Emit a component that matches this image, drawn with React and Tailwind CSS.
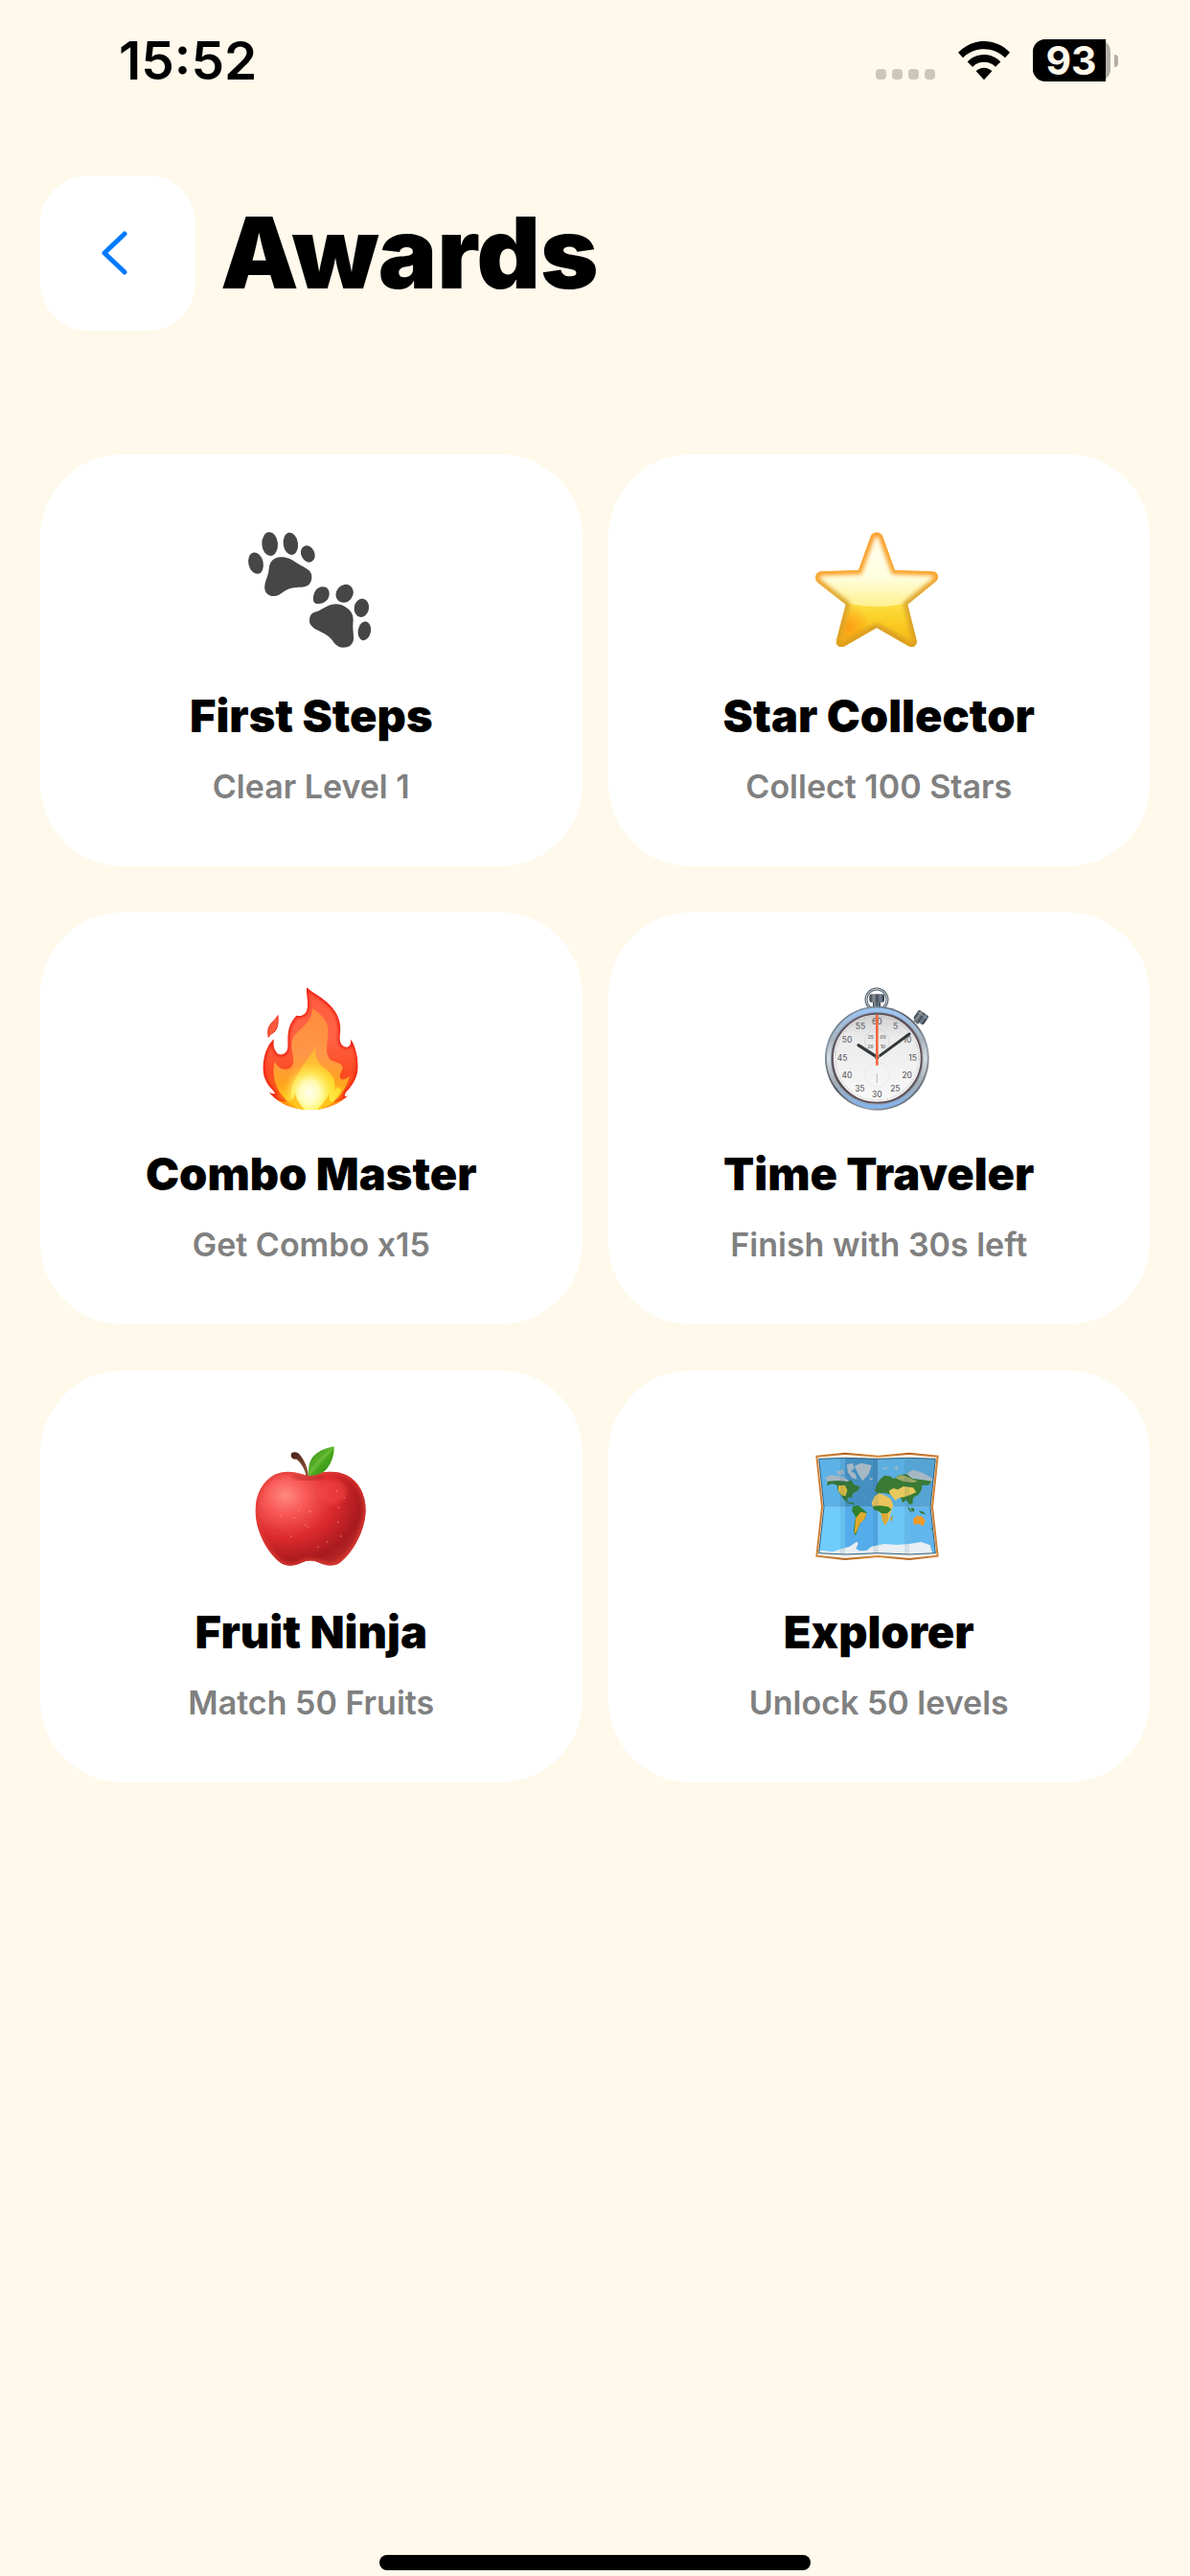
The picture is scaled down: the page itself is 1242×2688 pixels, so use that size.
import { useState } from "react";

function PawsIcon(props) {
  return (
    <svg viewBox="30 -7 450 465" fill="#464646" {...props}>
      <path d="M122 160C124 136 138 124 158 123C186 121 202 138 222 149C244 160 257 168 256 187C255 206 243 217 222 217C202 218 188 218 170 230C158 239 149 245 137 245C118 245 106 232 109 211C112 192 120 182 122 160Z" />
      <ellipse cx="81" cy="142" rx="23" ry="34" transform="rotate(-14 81 142)" />
      <ellipse cx="125" cy="82" rx="25" ry="37" transform="rotate(-4 125 82)" />
      <ellipse cx="190" cy="81" rx="23" ry="35" transform="rotate(-8 190 81)" />
      <ellipse cx="244" cy="113" rx="21" ry="27" transform="rotate(-26 244 113)" />
      <path d="M264 296C282 291 290 284 302 278C322 268 342 267 360 278C378 289 386 300 386 322C383 345 388 360 387 379C386 396 373 406 354 406C336 406 328 394 318 381C306 366 290 360 272 351C256 342 248 332 249 320C249 308 254 299 264 296Z" />
      <path d="M289 216C304 215 312 226 311 239C310 256 297 269 277 269C264 270 259 261 261 247C264 229 274 217 289 216Z" />
      <ellipse cx="359" cy="237" rx="26" ry="30" transform="rotate(40 359 237)" />
      <ellipse cx="412" cy="282" rx="23" ry="29" transform="rotate(10 412 282)" />
      <ellipse cx="421" cy="354" rx="20" ry="30" transform="rotate(10 421 354)" />
    </svg>
  );
}

const STAR =
  "M219 59C225 41 250 41 257 59L295 164L412 168C431 169 436 189 422 200L335 271L363 383C366 401 350 409 337 401L238 344L139 401C126 409 109 402 112 384L141 271L54 203C40 191 47 169 65 168L181 164Z";

function StarIcon(props) {
  return (
    <svg viewBox="19 -7 450 465" {...props}>
      <defs>
        <linearGradient id="star-edge" x1="0" y1="0" x2="0" y2="1">
          <stop offset="0" stopColor="#fb9a26" />
          <stop offset=".38" stopColor="#f9a42c" />
          <stop offset=".58" stopColor="#d9a832" />
          <stop offset="1" stopColor="#dfa01c" />
        </linearGradient>
        <linearGradient id="star-low" x1="0" y1="0" x2="0" y2="1">
          <stop offset=".55" stopColor="#ffe64e" />
          <stop offset=".8" stopColor="#fbcb22" />
          <stop offset="1" stopColor="#f2b41c" />
        </linearGradient>
        <linearGradient id="star-high" x1="0" y1="0" x2="0" y2="1">
          <stop offset="0" stopColor="#fffef0" />
          <stop offset=".6" stopColor="#ffffe2" />
          <stop offset="1" stopColor="#fff08e" />
        </linearGradient>
        <radialGradient id="star-warm">
          <stop offset="0" stopColor="#ff9410" stopOpacity=".8" />
          <stop offset="1" stopColor="#ff9410" stopOpacity="0" />
        </radialGradient>
        <filter id="star-soft" x="-10%" y="-10%" width="120%" height="120%">
          <feGaussianBlur stdDeviation="7" />
        </filter>
        <clipPath id="star-clip">
          <path d={STAR} />
        </clipPath>
      </defs>
      <g clipPath="url(#star-clip)">
        <path d={STAR} fill="url(#star-low)" />
        <path d="M40 40H440V225Q340 278 238 278Q136 278 40 225Z" fill="url(#star-high)" />
        <circle cx="150" cy="340" r="70" fill="url(#star-warm)" />
        <path d="M238 344L337 401M238 344L139 401" stroke="#c98d12" strokeWidth="16" opacity=".7" filter="url(#star-soft)" />
        <path d={STAR} fill="none" stroke="url(#star-edge)" strokeWidth="26" filter="url(#star-soft)" />
        <path d={STAR} fill="none" stroke="url(#star-edge)" strokeWidth="6" opacity=".4" />
      </g>
    </svg>
  );
}

const FLAME =
  "M210 46C235 68 270 82 294 114C316 143 318 170 314 198C312 220 322 234 337 233C348 230 350 220 348 208C362 228 371 262 371 295C370 325 356 350 338 369C331 376 327 384 330 387C334 387 338 385 340 383C325 401 290 421 245 428C225 431 205 430 190 427C150 420 118 405 90 372C97 377 106 381 112 378C108 370 96 362 86 345C74 324 70 300 76 272C81 245 92 221 108 208C104 224 107 243 120 254C133 261 149 252 151 235C153 215 148 198 156 172C161 154 170 144 178 134C192 138 206 132 211 117C217 96 209 72 210 46Z";

function FireIcon(props) {
  return (
    <svg viewBox="0 3 450 465" {...props}>
      <defs>
        <linearGradient id="fire-red" x1="0" y1="0" x2="0" y2="1">
          <stop offset="0" stopColor="#ff5a3c" />
          <stop offset=".4" stopColor="#ff6446" />
          <stop offset=".7" stopColor="#fb4a22" />
          <stop offset="1" stopColor="#ff7a10" />
        </linearGradient>
        <linearGradient id="fire-orange" x1="0" y1="0" x2="0" y2="1">
          <stop offset="0" stopColor="#ff8c3c" />
          <stop offset=".45" stopColor="#ff9648" />
          <stop offset=".75" stopColor="#ffa51e" />
          <stop offset="1" stopColor="#ffe21e" />
        </linearGradient>
        <linearGradient id="fire-yellow" x1="0" y1="0" x2="0" y2="1">
          <stop offset="0" stopColor="#ffae3c" />
          <stop offset=".5" stopColor="#ffd32c" />
          <stop offset="1" stopColor="#fff23c" />
        </linearGradient>
        <radialGradient id="fire-glow">
          <stop offset="0" stopColor="#fffff0" />
          <stop offset=".4" stopColor="#ffffc4" stopOpacity=".9" />
          <stop offset="1" stopColor="#fff23c" stopOpacity="0" />
        </radialGradient>
        <filter id="fire-soft">
          <feGaussianBlur stdDeviation="5" />
        </filter>
        <clipPath id="fire-clip">
          <path d={FLAME} />
        </clipPath>
      </defs>
      <path d="M120 134C122 158 119 178 107 187C99 192 94 195 91 202C87 184 89 172 99 159C108 149 115 143 120 134Z" fill="#fb5a3c" stroke="#ee3424" strokeWidth="3" />
      <g clipPath="url(#fire-clip)">
        <path d={FLAME} fill="url(#fire-red)" />
        <path d={FLAME} fill="none" stroke="#ee2412" strokeWidth="12" filter="url(#fire-soft)" />
        <path d="M228 112C256 130 277 150 277 180C278 210 268 240 277 262C285 283 310 276 320 290C329 303 309 315 315 329C321 340 334 333 345 323C330 375 300 412 245 430H190C145 405 112 370 107 320C106 304 106 288 112 278C119 300 144 310 161 296C180 278 158 242 164 215C172 180 232 160 228 112Z" fill="url(#fire-orange)" />
        <path d="M238 232C236 270 246 284 270 302C298 322 300 344 299 372C300 360 308 352 318 366C306 398 280 420 245 430H190C160 412 154 366 172 336C186 310 214 270 238 232Z" fill="url(#fire-yellow)" />
        <ellipse cx="219" cy="376" rx="82" ry="92" fill="url(#fire-glow)" />
        <path d="M172 371C176 396 190 412 204 430H160C130 420 110 404 100 388C140 412 176 410 172 371ZM282 378C268 402 254 416 243 430H280L335 390C310 404 274 420 282 378Z" fill="#ffb60a" opacity=".75" />
      </g>
    </svg>
  );
}

const DIAL = [
  { n: "60", x: 224, y: 153 },
  { n: "5", x: 282, y: 169 },
  { n: "10", x: 319, y: 211 },
  { n: "15", x: 336, y: 268 },
  { n: "20", x: 318, y: 321 },
  { n: "25", x: 281, y: 364 },
  { n: "30", x: 224, y: 381 },
  { n: "35", x: 170, y: 364 },
  { n: "40", x: 130, y: 321 },
  { n: "45", x: 115, y: 268 },
  { n: "50", x: 130, y: 211 },
  { n: "55", x: 172, y: 169 },
];

function StopwatchIcon(props) {
  return (
    <svg viewBox="4 3 450 465" {...props}>
      <defs>
        <linearGradient id="watch-rim" x1="0" y1="0" x2="1" y2="1">
          <stop offset="0" stopColor="#3e4650" />
          <stop offset=".2" stopColor="#8296a7" />
          <stop offset=".45" stopColor="#50555c" />
          <stop offset=".7" stopColor="#98a2ac" />
          <stop offset="1" stopColor="#32383f" />
        </linearGradient>
        <linearGradient id="watch-ring" x1="0" y1="0" x2="0" y2="1">
          <stop offset="0" stopColor="#9cc4f2" />
          <stop offset=".3" stopColor="#aab4be" />
          <stop offset=".5" stopColor="#d8dee3" />
          <stop offset=".75" stopColor="#a4adb6" />
          <stop offset="1" stopColor="#86b4ee" />
        </linearGradient>
        <linearGradient id="watch-face" x1="0" y1="0" x2="0" y2="1">
          <stop offset="0" stopColor="#cfcfd0" />
          <stop offset=".25" stopColor="#eaeaeb" />
          <stop offset="1" stopColor="#fafafa" />
        </linearGradient>
        <linearGradient id="watch-knob" x1="0" y1="0" x2="1" y2="0">
          <stop offset="0" stopColor="#30373e" />
          <stop offset=".3" stopColor="#8b959c" />
          <stop offset=".5" stopColor="#454c53" />
          <stop offset=".75" stopColor="#74869a" />
          <stop offset="1" stopColor="#22282e" />
        </linearGradient>
      </defs>
      <circle cx="223" cy="84" r="33" fill="none" stroke="#56626e" strokeWidth="9" />
      <circle cx="223" cy="84" r="33" fill="none" stroke="#d3dbe2" strokeWidth="3" />
      <rect x="211" y="88" width="24" height="22" fill="url(#watch-knob)" />
      <rect x="200" y="67" width="47" height="26" rx="7" fill="url(#watch-knob)" />
      <path d="M338 150L352 162L362 151L350 140Z" fill="#636c75" />
      <g transform="rotate(35 362 141)">
        <rect x="342" y="123" width="38" height="34" rx="6" fill="url(#watch-knob)" />
        <path d="M342 132H380" stroke="#8c9aa6" strokeWidth="3" />
      </g>
      <circle cx="224" cy="268" r="163" fill="url(#watch-rim)" />
      <circle cx="224" cy="268" r="151" fill="none" stroke="url(#watch-ring)" strokeWidth="13" />
      <circle cx="224" cy="268" r="139" fill="url(#watch-face)" stroke="#5e4c54" strokeWidth="5" />
      <circle cx="224" cy="268" r="131" fill="none" stroke="#8b8b8e" strokeWidth="5" strokeDasharray="1 5.86" />
      <g fill="none" stroke="#c4c4c6" strokeWidth="3" strokeDasharray="3 4">
        <circle cx="224" cy="215" r="38" />
        <circle cx="224" cy="319" r="38" stroke="#dadadc" />
      </g>
      <path d="M224 316V346" stroke="#c9c9cc" strokeWidth="4" />
      <g fontSize="25" fontWeight="500" textAnchor="middle" dominantBaseline="central" fill="#626266">
        {DIAL.map((d) => (
          <text key={d.n} x={d.x} y={d.y}>
            {d.n}
          </text>
        ))}
      </g>
      <g fontSize="14" fontWeight="700" textAnchor="middle" dominantBaseline="central" fill="#777">
        <text x="204" y="202">25</text>
        <text x="243" y="202">05</text>
        <text x="204" y="230">20</text>
        <text x="243" y="230">10</text>
      </g>
      <path d="M166 227L216 259" stroke="#33383b" strokeWidth="10" strokeLinecap="round" />
      <path d="M234 259L325 192" stroke="#33383b" strokeWidth="9" strokeLinecap="round" />
      <circle cx="224" cy="265" r="7" fill="#555" />
      <path d="M224 132V290" stroke="#f5663c" strokeWidth="8" />
    </svg>
  );
}

const APPLE =
  "M216 140C252 128 294 118 335 137C375 157 396 202 395 249C393 312 354 381 312 413C294 423 272 421 250 411C228 402 212 403 192 412C170 422 148 424 130 412C88 381 50 312 50 249C49 201 70 157 110 135C148 118 184 128 216 140Z";

function AppleIcon(props) {
  return (
    <svg viewBox="0 1 450 465" {...props}>
      <defs>
        <radialGradient id="apple-skin" cx=".28" cy=".26" r=".85">
          <stop offset="0" stopColor="#ff8a80" />
          <stop offset=".2" stopColor="#f95c5a" />
          <stop offset=".5" stopColor="#dd2a2e" />
          <stop offset=".8" stopColor="#a81a1e" />
          <stop offset="1" stopColor="#c0302c" />
        </radialGradient>
        <linearGradient id="apple-leaf" x1="0" y1="0" x2="1" y2="1">
          <stop offset=".2" stopColor="#3f9a1c" />
          <stop offset=".5" stopColor="#62b82e" />
          <stop offset=".55" stopColor="#48a81c" />
          <stop offset="1" stopColor="#2c8410" />
        </linearGradient>
        <linearGradient id="apple-stem" x1="0" y1="0" x2="1" y2="1">
          <stop offset="0" stopColor="#4a1d16" />
          <stop offset="1" stopColor="#8e5a3c" />
        </linearGradient>
        <filter id="apple-soft" x="-10%" y="-10%" width="120%" height="120%">
          <feGaussianBlur stdDeviation="6" />
        </filter>
        <clipPath id="apple-clip">
          <path d={APPLE} />
        </clipPath>
      </defs>
      <g clipPath="url(#apple-clip)">
        <rect x="45" y="120" width="355" height="310" fill="url(#apple-skin)" />
        <path d={APPLE} fill="none" stroke="#e23a30" strokeWidth="12" filter="url(#apple-soft)" />
        <ellipse cx="290" cy="190" rx="45" ry="38" fill="#f8484a" opacity=".5" filter="url(#apple-soft)" />
        <path d="M168 138Q214 164 262 138" fill="none" stroke="#9c1a1c" strokeWidth="9" opacity=".6" filter="url(#apple-soft)" />
        <g fill="#ff9a8c" opacity=".45">
          <circle cx="185" cy="246" r="3" />
          <circle cx="220" cy="251" r="4" />
          <circle cx="172" cy="271" r="3" />
          <circle cx="206" cy="293" r="3" />
          <circle cx="215" cy="299" r="3" />
          <circle cx="130" cy="266" r="3" />
          <circle cx="162" cy="329" r="3" />
          <circle cx="108" cy="320" r="2" />
          <circle cx="305" cy="186" r="3" />
          <circle cx="328" cy="208" r="3" />
          <circle cx="311" cy="238" r="3" />
          <circle cx="309" cy="284" r="3" />
          <circle cx="274" cy="345" r="3" />
          <circle cx="246" cy="362" r="3" />
          <circle cx="318" cy="328" r="3" />
        </g>
      </g>
      <path d="M161 76C160 63 178 62 187 71C201 88 213 108 216 139H208C206 119 192 99 179 87C168 88 162 84 161 76Z" fill="url(#apple-stem)" />
      <path d="M296 47C269 52 236 64 223 90C215 107 216 124 216 139C240 138 264 132 277 112C291 91 297 69 296 47Z" fill="url(#apple-leaf)" />
      <path d="M285 62Q240 92 220 134" fill="none" stroke="#7cc84a" strokeWidth="3" opacity=".7" />
    </svg>
  );
}

const MAP_SHEET = "M57 86L139 83L243 86L340 83L422 86L406 237L422 381L340 385L243 381L139 385L57 381L73 237Z";

function MapIcon(props) {
  return (
    <svg viewBox="19 1 450 465" {...props}>
      <defs>
        <linearGradient id="map-frame" x1="0" y1="0" x2="1" y2="0">
          <stop offset="0" stopColor="#d0843c" />
          <stop offset=".24" stopColor="#b8651c" />
          <stop offset=".5" stopColor="#d68a3a" />
          <stop offset=".76" stopColor="#bb671e" />
          <stop offset="1" stopColor="#d28236" />
        </linearGradient>
        <clipPath id="map-clip">
          <path d={MAP_SHEET} />
        </clipPath>
      </defs>
      <path d="M50 78L139 69L243 78L340 69L429 78L412 237L429 390L340 400L243 391L139 400L50 390L67 237Z" fill="#f6f1e8" stroke="url(#map-frame)" strokeWidth="6" />
      <g clipPath="url(#map-clip)">
        <path d="M40 70H139V237H40Z" fill="#5cb2e6" />
        <path d="M139 70H243V237H139Z" fill="#4490c2" />
        <path d="M243 70H340V237H243Z" fill="#5aafe0" />
        <path d="M340 70H440V237H340Z" fill="#56a4d4" />
        <path d="M40 237H139V400H40Z" fill="#70ccfc" />
        <path d="M139 237H243V400H139Z" fill="#54acea" />
        <path d="M243 237H340V400H243Z" fill="#6cc6f8" />
        <path d="M340 237H440V400H340Z" fill="#62b6ee" />
        {/* ice and tundra */}
        <path d="M76 145L95 137L135 142L152 156L140 163L118 157L84 158ZM112 126L134 119L136 134L118 136ZM144 104L163 99L168 116L158 124L172 134L176 150L160 145L148 128ZM168 108L190 99L222 106L213 134L194 155L182 136ZM212 146L227 147L222 154ZM250 119L274 110L268 117ZM292 115L304 108L302 122ZM330 132L352 120L376 128L398 138L414 148L408 158L380 152L350 148L328 146Z" fill="#a6b8c4" />
        <path d="M57 381L62 372L100 377L130 367L152 361L176 345L180 352L173 366L184 374L206 373L222 360L262 352L300 355L340 352L378 346L405 356L412 378L422 392H57Z" fill="#e9eff3" />
        {/* Americas */}
        <path d="M84 156L118 154L148 157L158 152L166 166L187 174L178 186L163 194L160 208L152 205L145 212L150 222L164 222L170 229L152 226L136 214L126 200L116 184L114 168L98 164L82 170Z" fill="#347638" />
        <path d="M118 170L138 168L146 184L140 203L128 200L118 186Z" fill="#dfbd42" />
        <path d="M162 236L178 231L192 240L207 254L202 272L188 286L180 304L172 326L166 316L168 290L172 268L161 250Z" fill="#2f8030" />
        <path d="M188 252L206 256L200 274L186 288L176 312L168 322L170 296L172 272Z" fill="#e0aa2e" />
        {/* Europe and Asia */}
        <path d="M237 170L248 150L262 138L278 140L292 148L310 136L332 134L350 148L384 152L410 156L400 168L380 168L378 184L368 198L352 208L350 226L340 228L330 214L320 224L312 206L296 210L284 198L262 192L242 194L232 186Z" fill="#397b35" />
        <path d="M276 186L290 178L304 182L322 172L352 176L362 190L344 198L328 204L308 208L296 216L288 206L280 196Z" fill="#e6c95c" />
        <path d="M296 146L312 136L330 140L350 150L368 156L350 160L320 156Z" fill="#9caa68" />
        {/* Africa */}
        <path d="M232 202L246 194L268 202L282 212L290 230L284 250L276 276L264 294L256 278L250 254L228 242L222 224Z" fill="#e9c45c" />
        <path d="M226 234L250 232L274 236L284 244L272 256L256 258L244 250L228 244Z" fill="#35802c" />
        <path d="M252 258L274 256L274 276L264 294L256 278Z" fill="#dda836" />
        <path d="M282 268L289 264L286 280L281 282Z" fill="#c29c38" />
        {/* Oceania */}
        <path d="M334 236L342 242L350 256L340 248ZM346 238L356 242L354 252L347 248ZM370 248L384 252L392 260L376 256ZM344 216L350 220L348 230Z" fill="#33752e" />
        <path d="M352 274L364 264L380 266L390 280L384 296L370 290L354 292Z" fill="#ef9a2a" />
        <path d="M408 304L412 300L410 310Z" fill="#4a7a3a" />
        <path d="M123 70H139V400H123ZM227 70H243V400H227ZM325 70H340V400H325Z" fill="#1c4c70" opacity=".1" />
      </g>
      <path d={MAP_SHEET} fill="none" stroke="#35607c" strokeWidth="3" />
    </svg>
  );
}

const AWARDS = [
  { title: "First Steps", goal: "Clear Level 1", Icon: PawsIcon },
  { title: "Star Collector", goal: "Collect 100 Stars", Icon: StarIcon },
  { title: "Combo Master", goal: "Get Combo x15", Icon: FireIcon },
  { title: "Time Traveler", goal: "Finish with 30s left", Icon: StopwatchIcon },
  { title: "Fruit Ninja", goal: "Match 50 Fruits", Icon: AppleIcon },
  { title: "Explorer", goal: "Unlock 50 levels", Icon: MapIcon },
];

function StatusBar() {
  return (
    <div className="flex items-center justify-between pt-8 pl-[124px] pr-[75px]">
      <div className="text-[55px] leading-[62px] font-semibold">15:52</div>
      <div className="flex items-center">
        <div className="flex gap-[6px] pt-7 mr-6">
          <span className="size-[11px] rounded-[4px] bg-[#ccc7bb]" />
          <span className="size-[11px] rounded-[4px] bg-[#ccc7bb]" />
          <span className="size-[11px] rounded-[4px] bg-[#ccc7bb]" />
          <span className="size-[11px] rounded-[4px] bg-[#ccc7bb]" />
        </div>
        <svg viewBox="0 0 162 122" className="w-[54px] h-[41px] mr-6">
          <path d="M0 35C44 -12 118 -12 162 35L147 51C110 15 52 15 15 51Z" />
          <path d="M29 64C57 34 105 34 133 64L117 80C98 60 64 60 45 80Z" />
          <path d="M56 93C69 79 93 79 106 93L81 120Z" />
        </svg>
        <div className="flex items-center gap-1">
          <div className="w-[81px] h-[44px] rounded-[13px] bg-[#b3aea5] flex">
            <div className="w-[76px] rounded-l-[13px] bg-black text-[#fff9eb] text-[41px] leading-[44px] font-bold text-center pl-1">93</div>
          </div>
          <div className="w-1 h-[13px] rounded-r-full bg-[#b3aea5]" />
        </div>
      </div>
    </div>
  );
}

function AwardCard({ title, goal, Icon }) {
  return (
    <li className="flex flex-col items-center rounded-[86px] bg-white pt-16 pb-[63px]">
      <Icon className="w-[150px] h-[155px]" aria-hidden="true" />
      <h2 className="mt-7 text-[47px] leading-[52px] font-black">{title}</h2>
      <p className="mt-7 text-[34px] leading-10 font-semibold text-[#808080]">{goal}</p>
    </li>
  );
}

export default function App() {
  const [awards] = useState(AWARDS);

  return (
    <div className="min-h-screen flex flex-col bg-[#fff9eb] text-black font-['Inter',sans-serif]">
      <StatusBar />
      <header className="flex items-center gap-[26px] px-[42px] mt-[89px]">
        <button
          type="button"
          aria-label="Back"
          className="size-[162px] rounded-[50px] bg-white flex items-center justify-center pr-2"
        >
          <svg viewBox="0 0 28 46" className="w-7 h-[46px]" fill="none" stroke="#007aff" strokeWidth="5" strokeLinecap="round" strokeLinejoin="round">
            <path d="M25 3L4 23L25 43" />
          </svg>
        </button>
        <h1 className="text-[103px] leading-[120px] font-black">Awards</h1>
      </header>
      <main className="px-[42px] mt-[129px]">
        <ul className="grid grid-cols-2 gap-x-[27px] gap-y-12">
          {awards.map((a) => (
            <AwardCard key={a.title} {...a} />
          ))}
        </ul>
      </main>
      <div className="mt-auto pt-12 pb-[6px] flex justify-center">
        <div className="w-[450px] h-4 rounded-full bg-black" />
      </div>
    </div>
  );
}
